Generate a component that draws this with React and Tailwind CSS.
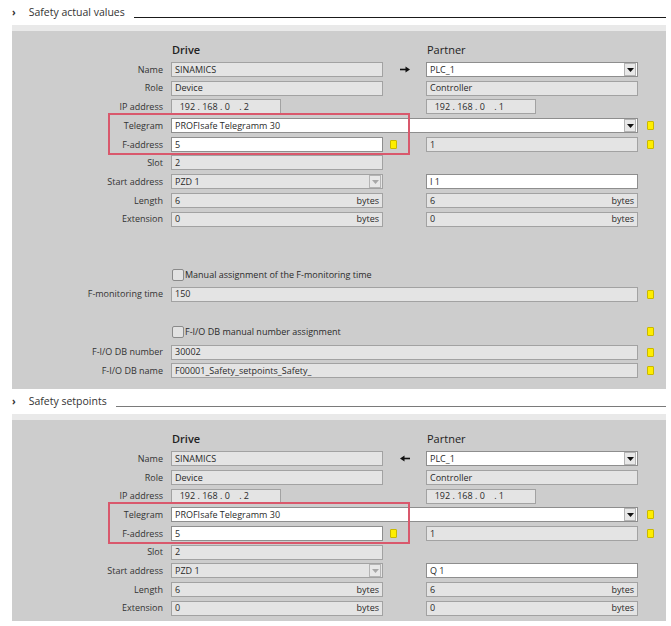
function Marker({ className = '' }) {
  return <div className={`h-[9px] w-[7px] shrink-0 rounded-[1px] border border-[#c9b800] bg-[#ffee00] ${className}`} />;
}

function DropButton({ disabled }) {
  return (
    <div className="ml-auto mr-px flex h-[13px] w-[12px] shrink-0 items-center justify-center border border-[#b4b4b4] bg-[#e8e8e8]">
      <svg width="7" height="4" viewBox="0 0 7 4">
        <path d="M0 0 L7 0 L3.5 4 Z" fill={disabled ? '#a8a8a8' : '#111'} />
      </svg>
    </div>
  );
}

function Field({ w, white, children, suffix, dd, ddDisabled }) {
  return (
    <div
      className={`flex h-[15px] shrink-0 items-center border ${
        white ? 'border-[#8e8e8e] bg-white' : 'border-[#a2a2a2] bg-[#e4e4e4]'
      } pl-[3px] text-[9px] text-[#2a2a2a]`}
      style={{ width: w }}
    >
      <span className="whitespace-pre">{children}</span>
      {suffix && <span className="ml-auto pr-[3px]">{suffix}</span>}
      {dd && <DropButton disabled={ddDisabled} />}
    </div>
  );
}

function Row({ label, children, className = '' }) {
  return (
    <div className={`flex h-[15px] items-center ${className}`}>
      <div className="w-[159px] shrink-0 pr-[8px] text-right text-[9px] text-[#333]">{label}</div>
      {children}
    </div>
  );
}

function Arrow({ left }) {
  return (
    <div className="flex w-[43px] shrink-0 justify-center pl-[1px]">
      <svg width="10" height="7" viewBox="0 0 10 7" style={left ? { transform: 'scaleX(-1)' } : undefined}>
        <path d="M0 3.5 H7" stroke="#111" strokeWidth="1.6" />
        <path d="M5.5 0.5 L10 3.5 L5.5 6.5 Z" fill="#111" />
      </svg>
    </div>
  );
}

function Checkbox({ label, marker, className = '' }) {
  return (
    <div className={`flex h-[12px] items-center ${className}`}>
      <div className="w-[160px] shrink-0" />
      <div className="h-[12px] w-[12px] shrink-0 rounded-[2px] border border-[#8a8a8a] bg-[#e2e2e2]" />
      <span className="ml-px text-[9px] text-[#2a2a2a]">{label}</span>
      {marker && <Marker className="ml-auto mr-[12px]" />}
    </div>
  );
}

function Header({ title, lineClass }) {
  return (
    <div className="flex h-[25px] items-center bg-white pl-[12px]">
      <span className="text-[10px] font-bold text-[#333]">›</span>
      <span className="ml-[13px] text-[10.5px] text-[#333]">{title}</span>
      <div className={`ml-[9px] mr-[5px] mt-[9px] h-px flex-1 ${lineClass}`} />
    </div>
  );
}

function CommonRows({ dir, start }) {
  return (
    <>
      <div className="flex h-[14px] items-center">
        <div className="w-[160px] shrink-0" />
        <span className="w-[255px] text-[11px] font-semibold text-[#222]">Drive</span>
        <span className="text-[11px] text-[#222]">Partner</span>
      </div>
      <div className="mt-[5px] flex flex-col gap-[3.7px]">
        <Row label="Name">
          <Field w={212}>SINAMICS</Field>
          <Arrow left={dir === 'left'} />
          <Field w={212} white dd>PLC_1</Field>
        </Row>
        <Row label="Role">
          <Field w={212}>Device</Field>
          <div className="w-[43px] shrink-0" />
          <Field w={212}>Controller</Field>
        </Row>
        <Row label="IP address">
          <Field w={110}>{'  192 . 168 . 0    . 2'}</Field>
          <div className="w-[145px] shrink-0" />
          <Field w={110}>{'  192 . 168 . 0    . 1'}</Field>
        </Row>
        <div className="relative flex flex-col gap-[3.7px]">
          <div className="absolute -top-[5px] left-[96px] h-[42px] w-[302px] border-2 border-[#d9586c]" />
          <Row label="Telegram">
            <Field w={467} white dd>PROFIsafe Telegramm 30</Field>
            <Marker className="ml-[9px]" />
          </Row>
          <Row label="F-address">
            <Field w={212} white>5</Field>
            <Marker className="ml-[7px]" />
            <div className="w-[29px] shrink-0" />
            <Field w={212}>1</Field>
            <Marker className="ml-[9px]" />
          </Row>
        </div>
        <Row label="Slot">
          <Field w={212}>2</Field>
        </Row>
        <Row label="Start address">
          <Field w={212} dd ddDisabled>PZD 1</Field>
          <div className="w-[43px] shrink-0" />
          <Field w={212} white>{start}</Field>
        </Row>
        <Row label="Length">
          <Field w={212} suffix="bytes">6</Field>
          <div className="w-[43px] shrink-0" />
          <Field w={212} suffix="bytes">6</Field>
        </Row>
        <Row label="Extension">
          <Field w={212} suffix="bytes">0</Field>
          <div className="w-[43px] shrink-0" />
          <Field w={212} suffix="bytes">0</Field>
        </Row>
      </div>
    </>
  );
}

export default function App() {
  return (
    <div className="h-[626px] w-[671px] overflow-hidden bg-white font-['Open_Sans','Liberation_Sans',sans-serif]">
      <Header title="Safety actual values" lineClass="bg-[#1a1a1a]" />
      <div className="ml-[12px] mr-[5px]">
        <div className="h-[6px] bg-[#e9e9e9]" />
        <div className="bg-[#cdcdcd] pb-[11px] pt-[12px]">
          <CommonRows dir="right" start="I 1" />
          <Checkbox className="mt-[42px]" label="Manual assignment of the F-monitoring time" />
          <Row label="F-monitoring time" className="mt-[6px]">
            <Field w={467}>150</Field>
            <Marker className="ml-[9px]" />
          </Row>
          <Checkbox className="mt-[24px]" label="F-I/O DB manual number assignment" marker />
          <div className="mt-[7px] flex flex-col gap-[3.7px]">
            <Row label="F-I/O DB number">
              <Field w={467}>30002</Field>
              <Marker className="ml-[9px]" />
            </Row>
            <Row label="F-I/O DB name">
              <Field w={467}>F00001_Safety_setpoints_Safety_</Field>
              <Marker className="ml-[9px]" />
            </Row>
          </div>
        </div>
      </div>
      <Header title="Safety setpoints" lineClass="bg-[#7a7a7a]" />
      <div className="ml-[12px] mr-[5px]">
        <div className="h-[6px] bg-[#e9e9e9]" />
        <div className="bg-[#cdcdcd] pb-[5px] pt-[12px]">
          <CommonRows dir="left" start="Q 1" />
        </div>
      </div>
    </div>
  );
}
